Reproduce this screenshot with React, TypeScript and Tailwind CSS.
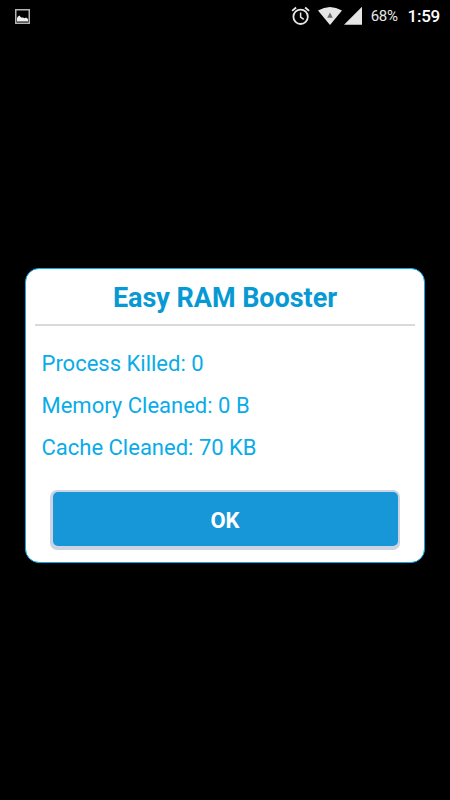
import React from 'react';

const stats = [
  { label: 'Process Killed', value: '0' },
  { label: 'Memory Cleaned', value: '0 B' },
  { label: 'Cache Cleaned', value: '70 KB' },
];

function StatusBar() {
  return (
    <div className="flex h-8 items-center justify-between pr-[10px] pl-[15px] text-[#e6e6e6]">
      <svg width="15" height="15" viewBox="0 0 15 15" className="shrink-0">
        <rect x="0.75" y="0.75" width="13.5" height="13.5" fill="none" stroke="#b4b4b4" strokeWidth="1.5" />
        <path d="M2 12.5V9l1-1.5 1.5-1L6 8.5h2l1.5.7L11 8.5l2 1.5v2.5z" fill="#f0f0f0" />
      </svg>
      <div className="flex items-center">
        {/* alarm */}
        <svg width="20" height="20" viewBox="0 0 20 20" fill="none" stroke="currentColor">
          <circle cx="9.6" cy="10.8" r="7.2" strokeWidth="1.8" />
          <path d="M9.6 6.6v4.6l3.2 2.2" strokeWidth="1.5" />
          <path d="M1.1 4.9L5.1 1.5M18.1 4.9L14.1 1.5" strokeWidth="1.9" />
        </svg>
        {/* wifi */}
        <svg width="24" height="20" viewBox="0 0 24 20" className="ml-[7px]">
          <path d="M12 18.9L0 4.6Q12-2.6 24 4.6z" fill="currentColor" />
          <path d="M12 6.6l2.8 5.2H9.200z" fill="#6e6e6e" />
        </svg>
        {/* signal */}
        <svg width="18" height="20" viewBox="0 0 18 20" className="ml-[2px]">
          <path d="M18 0.8v18H0z" fill="currentColor" />
        </svg>
        <span className="ml-[9px] pt-px text-[15px] tracking-[-0.35px]">68%</span>
        <span className="ml-[10px] pt-[2px] text-[17px] font-medium tracking-[-0.25px] text-white">1:59</span>
      </div>
    </div>
  );
}

export default function App() {
  return (
    <div className="h-[800px] w-[450px] bg-black font-['Roboto',sans-serif]">
      <StatusBar />
      <div className="mx-auto mt-[236px] h-[295px] w-[400px] rounded-[14px] border border-[#08a9ea] bg-white px-[9px]">
        <h1 className="flex h-[57px] items-center justify-center border-b-2 border-[#dadada] pt-[3px] text-[27px] font-bold tracking-[-0.04px] whitespace-nowrap text-[#0799d3]">
          Easy RAM Booster
        </h1>
        <div className="pt-[17px] pl-[6.5px] text-[22px] text-[#09ace8]">
          {stats.map(stat => (
            <p key={stat.label} className="h-[42px] leading-[42px] whitespace-nowrap">
              {stat.label}: {stat.value}
            </p>
          ))}
        </div>
        <button className="mx-[15px] mt-[21px] flex h-[60px] w-[350px] rounded-[7px] bg-[#ccd3e3] px-[2.5px] pt-[1.5px] pb-[4px]">
          <span className="flex h-full w-full items-center justify-center rounded-[5px] bg-[#1797d7] pt-[3px] text-[22px] font-bold text-white">
            OK
          </span>
        </button>
      </div>
    </div>
  );
}
